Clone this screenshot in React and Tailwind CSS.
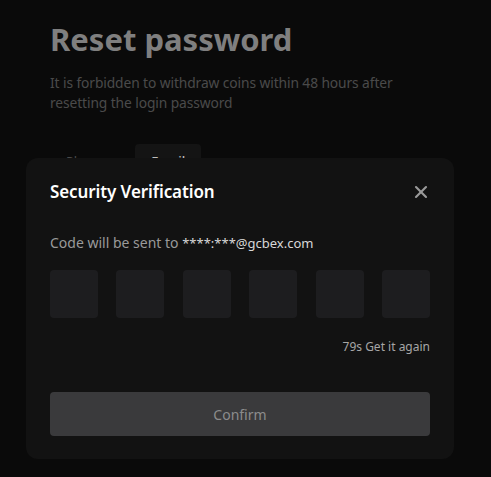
import React from 'react';
import { X } from 'lucide-react';

const font = { fontFamily: '"Noto Sans", "Liberation Sans", sans-serif' };

export default function App() {
  const boxes = [0, 1, 2, 3, 4, 5];

  return (
    <div className="relative w-[491px] h-[477px] overflow-hidden bg-[#0a0a0a]" style={font}>
      {/* Page behind the overlay */}
      <div className="px-[50px] pt-[19px]">
        <h1 className="text-[31px] leading-[40px] font-bold text-[#7f7f7f]">Reset password</h1>
        <p className="mt-[14px] text-[13.8px] leading-[20px] text-[#4a4a4a] w-[380px] tracking-[-0.1px]">
          It is forbidden to withdraw coins within 48 hours after resetting the login password
        </p>
        <div className="mt-[31px] flex items-start gap-[30px]">
          <span className="ml-[16px] mt-[8px] text-[13px] text-[#4a4a4a]">Phone</span>
          <span className="px-[16px] pt-[8px] h-[30px] rounded-[4px] bg-[#141414] text-[13px] font-medium text-[#bdbdbd]">Email</span>
        </div>
      </div>

      {/* Modal overlay */}
      <div className="absolute left-[26px] top-[158px] w-[428px] h-[301px] rounded-[12px] bg-[#121212] px-[24px] pt-[22px]">
        <div className="flex items-center justify-between h-[24px]">
          <h2 className="text-[17px] font-semibold text-white tracking-[-0.1px]">Security Verification</h2>
          <X className="w-[20px] h-[20px] text-[#9a9a9a] -mr-[1px]" strokeWidth={2.5} />
        </div>
        <p className="mt-[29px] text-[14px] leading-[20px] text-[#9a9a9a]">
          Code will be sent to <span className="text-[13px] text-[#d8d8d8]">****:***@gcbex.com</span>
        </p>
        <div className="mt-[17px] flex justify-between">
          {boxes.map((i) => (
            <div key={i} className="w-[48px] h-[48px] rounded-[4px] bg-[#1d1d1f]" />
          ))}
        </div>
        <div className="mt-[19px] text-right text-[12px] leading-[20px] text-[#a6a6a6]">79s Get it again</div>
        <button className="mt-[35px] w-full h-[44px] rounded-[4px] bg-[#3a3a3c] text-[14px] text-[#8c8c8c]">
          Confirm
        </button>
      </div>
    </div>
  );
}
